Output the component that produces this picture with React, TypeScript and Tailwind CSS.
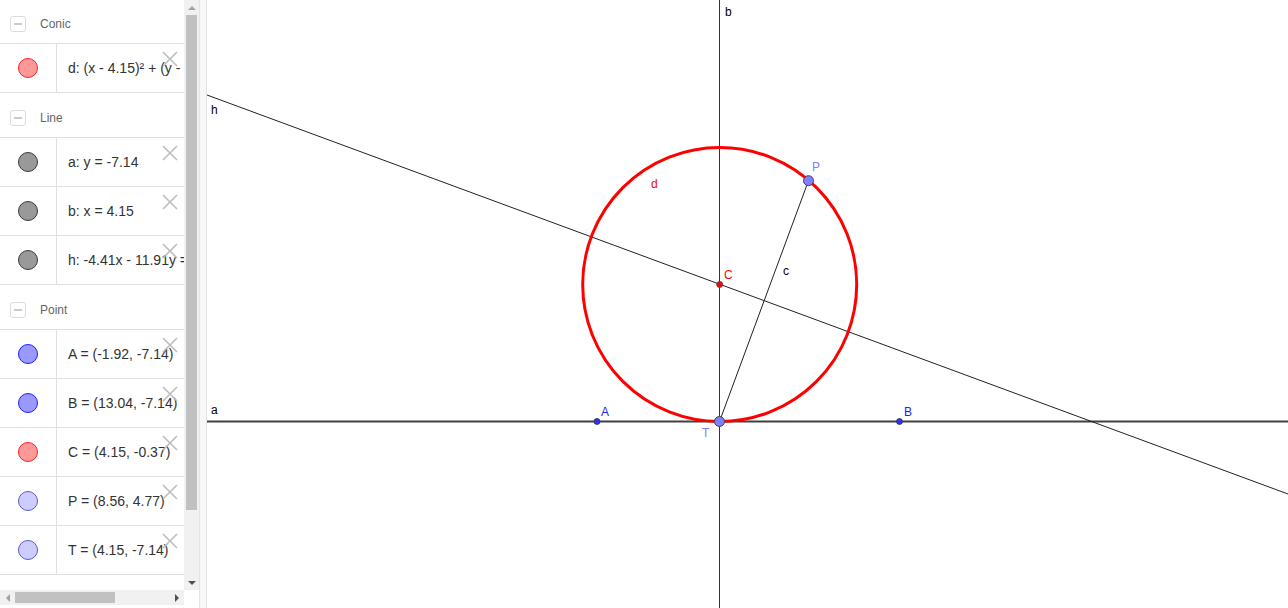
import React from "react";

type Item = { text: string; fill: string; stroke: string };
type Group = { title: string; items: Item[] };

const groups: Group[] = [
  {
    title: "Conic",
    items: [{ text: "d: (x - 4.15)² + (y - 0.37)² = 46.67", fill: "#ff9999", stroke: "#ff2020" }],
  },
  {
    title: "Line",
    items: [
      { text: "a: y = -7.14", fill: "#999999", stroke: "#3a3a3a" },
      { text: "b: x = 4.15", fill: "#999999", stroke: "#3a3a3a" },
      { text: "h: -4.41x - 11.91y = -22.94", fill: "#999999", stroke: "#3a3a3a" },
    ],
  },
  {
    title: "Point",
    items: [
      { text: "A = (-1.92, -7.14)", fill: "#9999ff", stroke: "#1f1fff" },
      { text: "B = (13.04, -7.14)", fill: "#9999ff", stroke: "#1f1fff" },
      { text: "C = (4.15, -0.37)", fill: "#ff9999", stroke: "#ff2020" },
      { text: "P = (8.56, 4.77)", fill: "#ccccff", stroke: "#5a5ad0" },
      { text: "T = (4.15, -7.14)", fill: "#ccccff", stroke: "#5a5ad0" },
    ],
  },
];

function CloseX() {
  return (
    <svg className="absolute left-[162px] top-[7px]" width="16" height="16" viewBox="0 0 16 16">
      <path d="M1 1 L15 15 M15 1 L1 15" stroke="#bdbdbd" strokeWidth="1.6" fill="none" />
    </svg>
  );
}

function Header({ title }: { title: string }) {
  return (
    <div className="flex h-[45px] items-start border-b border-[#e0e0e0]">
      <div className="ml-[10px] mt-[17px] flex h-[16px] w-[16px] items-center justify-center rounded-[3px] border border-[#dcdcdc] bg-white">
        <div className="h-[2px] w-[8px] bg-[#cccccc]" />
      </div>
      <div className="ml-[14px] mt-[17px] text-[12px] leading-[16px] text-[#666666]">{title}</div>
    </div>
  );
}

function Row({ item }: { item: Item }) {
  return (
    <div className="relative flex h-[49px] border-b border-[#e0e0e0]">
      <div className="flex w-[57px] shrink-0 items-center justify-center border-r border-[#e0e0e0]">
        <div
          className="h-[20px] w-[20px] rounded-full border"
          style={{ background: item.fill, borderColor: item.stroke }}
        />
      </div>
      <div className="flex items-center whitespace-nowrap pl-[11px] text-[14px] text-[#333333]">
        {item.text}
      </div>
      <CloseX />
    </div>
  );
}

function Canvas() {
  const label = { fontFamily: '"Liberation Sans", Arial, sans-serif', fontSize: 12 } as const;
  return (
    <svg width="1081" height="608" viewBox="207 0 1081 608" className="block">
      <line x1="719.5" y1="0" x2="719.5" y2="608" stroke="#333" strokeWidth="1" />
      <line x1="207" y1="421.5" x2="1288" y2="421.5" stroke="#404040" strokeWidth="1.8" />
      <line x1="207" y1="95" x2="1288" y2="494" stroke="#222" strokeWidth="1" />
      <circle cx="719.7" cy="284.5" r="137" fill="none" stroke="#ff0000" strokeWidth="3" />
      <line x1="719.5" y1="421.5" x2="808.5" y2="180.7" stroke="#222" strokeWidth="1" />
      <circle cx="597" cy="421.5" r="3" fill="#3030ff" stroke="#333" strokeWidth="0.8" />
      <circle cx="899.5" cy="421.5" r="3" fill="#3030ff" stroke="#333" strokeWidth="0.8" />
      <circle cx="719.7" cy="284.5" r="3" fill="#ff0000" stroke="#444" strokeWidth="0.8" />
      <circle cx="808.5" cy="180.7" r="5" fill="#7f7fff" stroke="#444" strokeWidth="1" />
      <circle cx="719.5" cy="421.5" r="5" fill="#7f7fff" stroke="#444" strokeWidth="1" />
      <text x="725" y="16" fill="#000" style={label}>b</text>
      <text x="211" y="114" fill="#000" style={label}>h</text>
      <text x="211" y="414" fill="#000" style={label}>a</text>
      <text x="651" y="188" fill="#ff0000" style={label}>d</text>
      <text x="724" y="279" fill="#ff0000" style={label}>C</text>
      <text x="783" y="275" fill="#000" style={label}>c</text>
      <text x="812" y="171" fill="#7f7fff" style={label}>P</text>
      <text x="601" y="416" fill="#2020ff" style={label}>A</text>
      <text x="904" y="416" fill="#2020ff" style={label}>B</text>
      <text x="702" y="437" fill="#7f7fff" style={label}>T</text>
    </svg>
  );
}

export default function App() {
  return (
    <div
      className="flex h-[608px] w-[1288px] overflow-hidden bg-white"
      style={{ fontFamily: '"Liberation Sans", Arial, sans-serif' }}
    >
      <div className="flex w-[199px] shrink-0 flex-col">
        <div className="flex h-[590px]">
          <div className="w-[184px] overflow-hidden">
            {groups.map((g, gi) => (
              <div key={g.title} className={gi === 0 ? "-mt-[1px]" : ""}>
                <Header title={g.title} />
                {g.items.map((it) => (
                  <Row key={it.text} item={it} />
                ))}
              </div>
            ))}
          </div>
          <div className="relative flex w-[15px] flex-col items-center bg-[#f1f1f1]">
            <div className="flex h-[15px] w-full items-center justify-center">
              <div className="h-0 w-0 border-x-[4px] border-b-[4px] border-x-transparent border-b-[#a3a3a3]" />
            </div>
            <div className="h-[495px] w-[11px] bg-[#c1c1c1]" />
            <div className="flex-1" />
            <div className="flex h-[15px] w-full items-center justify-center">
              <div className="h-0 w-0 border-x-[4px] border-t-[4px] border-x-transparent border-t-[#505050]" />
            </div>
          </div>
        </div>
        <div className="flex h-[15px]">
          <div className="flex w-[184px] items-center bg-[#f1f1f1]">
            <div className="flex w-[15px] items-center justify-center">
              <div className="h-0 w-0 border-y-[4px] border-r-[4px] border-y-transparent border-r-[#a3a3a3]" />
            </div>
            <div className="h-[11px] w-[100px] bg-[#c1c1c1]" />
            <div className="flex-1" />
            <div className="flex w-[15px] items-center justify-center">
              <div className="h-0 w-0 border-y-[4px] border-l-[4px] border-y-transparent border-l-[#505050]" />
            </div>
          </div>
          <div className="flex-1 bg-white" />
        </div>
      </div>
      <div className="w-[8px] shrink-0 border-x border-[#e4e4e4] bg-[#f7f7f7]" />
      <div className="flex-1">
        <Canvas />
      </div>
    </div>
  );
}
